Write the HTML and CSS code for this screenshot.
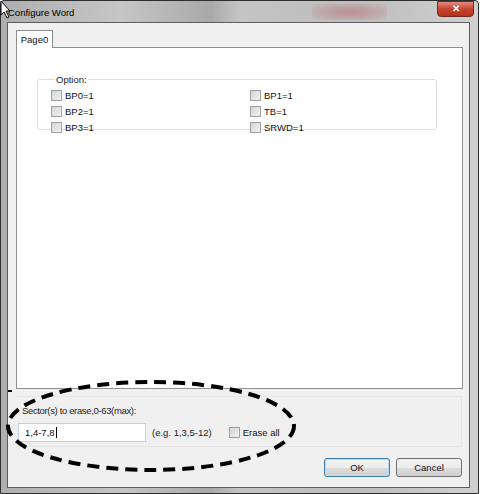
FILE: index.html
```html
<!DOCTYPE html>
<html lang="en">
<head>
  <meta charset="UTF-8">
  <title>Configure Word</title>
  <link rel="stylesheet" href="styles.css">
</head>
<body>
  <div class="window">
    <div class="titlebar">
      <span class="title">Configure Word</span>
      <span class="blur"></span>
      <button class="close-btn">&#x2715;</button>
    </div>

    <div class="client">
      <div class="tabs">
        <div class="tab">Page0</div>
      </div>
      <div class="tab-panel">
        <fieldset class="group">
          <legend>Option:</legend>
          <div class="options">
            <label class="check"><span class="box"></span>BP0=1</label>
            <label class="check"><span class="box"></span>BP1=1</label>
            <label class="check"><span class="box"></span>BP2=1</label>
            <label class="check"><span class="box"></span>TB=1</label>
            <label class="check"><span class="box"></span>BP3=1</label>
            <label class="check"><span class="box"></span>SRWD=1</label>
          </div>
        </fieldset>
      </div>

      <div class="sector-panel">
        <div class="sector-label">Sector(s) to erase,0-63(max):</div>
        <div class="sector-row">
          <div class="text-input">1,4-7,8<span class="caret"></span></div>
          <span class="hint">(e.g. 1,3,5-12)</span>
          <label class="check"><span class="box"></span>Erase all</label>
        </div>
      </div>

      <div class="buttons">
        <button class="btn btn-default">OK</button>
        <button class="btn">Cancel</button>
      </div>
    </div>
  </div>

  <!-- hand drawn annotation over the dialog -->
  <svg class="annotation" viewBox="0 0 480 494" width="480" height="494">
    <ellipse cx="151" cy="426" rx="143" ry="44" fill="none" stroke="#000" stroke-width="4" stroke-dasharray="12 7"/>
    <line x1="8" y1="391" x2="12" y2="391" stroke="#000" stroke-width="2"/>
  </svg>

  <svg class="cursor" viewBox="0 0 12 20" width="12" height="20">
    <path d="M1 1 L1 15 L4 12 L7 18 L9 17 L6 11 L10 11 Z" fill="#fff" stroke="#000" stroke-width="1"/>
  </svg>
</body>
</html>
```

FILE: styles.css
```css
body {
  margin: 0;
  font-family: "Liberation Sans", Arial, sans-serif;
  font-size: 9.5px;
  color: #111;
  background-color: #fff;
}

/* Outer window frame */
.window {
  width: 479px;
  height: 494px;
  box-sizing: border-box;
  border: 1px solid #2e2e2e;
  border-radius: 4px 4px 0 0;
  background: linear-gradient(to right, #aeaeae, #c6c6c6 25%, #a9a9a9 44%, #c4c4c4 50%, #bdbdbd 75%, #d0d0d0);
  padding: 0 8px 5px 6px;
  display: flex;
  flex-direction: column;
}

.titlebar {
  height: 21px;
  display: flex;
  align-items: center;
}

.title {
  font-size: 9.5px;
  color: #000;
  padding-left: 1px;
  margin-top: 1px;
}

.blur {
  width: 75px;
  height: 16px;
  margin-left: 238px;
  background: radial-gradient(ellipse at center, rgba(185, 95, 100, 0.5), rgba(200, 200, 200, 0));
}

.close-btn {
  margin-left: auto;
  margin-right: -4px;
  margin-top: -5px;
  width: 37px;
  height: 16px;
  border: 1px solid #6b2a22;
  border-radius: 0 0 4px 4px;
  background: linear-gradient(#e08d7f, #c7442f 50%, #b5311c);
  color: #fff;
  font-size: 10px;
  font-weight: bold;
  padding: 0;
  line-height: 14px;
}

/* Client area of the dialog */
.client {
  flex: 1;
  background-color: #f0f0f0;
  border: 1px solid #5e5e5e;
  display: flex;
  flex-direction: column;
  padding: 0 6px 0 8px;
}

.tabs {
  display: flex;
  margin-top: 7px;
}

.tab {
  height: 17px;
  width: 35px;
  border: 1px solid #8e8f8f;
  border-bottom: none;
  background-color: #fff;
  display: flex;
  align-items: center;
  justify-content: center;
  margin-bottom: -1px;
  position: relative;
  z-index: 1;
}

.tab-panel {
  height: 342px;
  box-sizing: border-box;
  border: 1px solid #8e8f8f;
  background-color: #fff;
  padding: 26px 0 0 20px;
}

.group {
  width: 400px;
  height: 56px;
  box-sizing: border-box;
  margin: 0;
  padding: 2px 0 0 13px;
  border: 1px solid #dcdfe3;
  border-radius: 3px;
}

.group legend {
  padding: 0 1px;
  margin-left: 4px;
  color: #222;
}

.options {
  display: grid;
  grid-template-columns: 199px 150px;
  grid-auto-rows: 16px;
}

.check {
  display: flex;
  align-items: center;
  gap: 3px;
}

.box {
  width: 9px;
  height: 9px;
  border: 1px solid #a0a0a0;
  background: linear-gradient(135deg, #d4d4d4, #f2f2f2);
}

/* Sector input area */
.sector-panel {
  margin-top: 7px;
  height: 51px;
  margin-right: 1px;
  box-sizing: border-box;
  border: 1px solid #e6e6e6;
  border-left: none;
  padding-left: 6px;
}

.sector-label {
  margin-top: 8px;
  height: 16px;
  color: #222;
  letter-spacing: -0.35px;
}

.sector-row {
  display: flex;
  align-items: center;
  margin-left: -6px;
  margin-top: 2px;
}

.text-input {
  width: 128px;
  height: 19px;
  margin-left: 2px;
  box-sizing: border-box;
  border: 1px solid #c1cfe0;
  background-color: #fff;
  display: flex;
  align-items: center;
  padding-left: 6px;
}

.caret {
  width: 1px;
  height: 11px;
  background-color: #000;
  margin-left: 1px;
}

.hint {
  margin-left: 6px;
  color: #222;
}

.sector-row .check {
  margin-left: 17px;
}

.buttons {
  display: flex;
  justify-content: flex-end;
  gap: 6px;
  margin-top: 11px;
  margin-right: 1px;
}

.btn {
  width: 66px;
  height: 19px;
  border: 1px solid #707070;
  border-radius: 3px;
  background: linear-gradient(#f3f3f3, #ebebeb 50%, #dddddd 51%, #cfcfcf);
  font-family: "Liberation Sans", Arial, sans-serif;
  font-size: 9.5px;
  color: #111;
  padding: 0;
}

.btn-default {
  border-color: #3c7fb1;
  box-shadow: inset 0 0 0 1px #b9dcf3;
}

.annotation {
  position: absolute;
  left: 0;
  top: 0;
  pointer-events: none;
}

.cursor {
  position: absolute;
  left: 0;
  top: 0;
}
```
